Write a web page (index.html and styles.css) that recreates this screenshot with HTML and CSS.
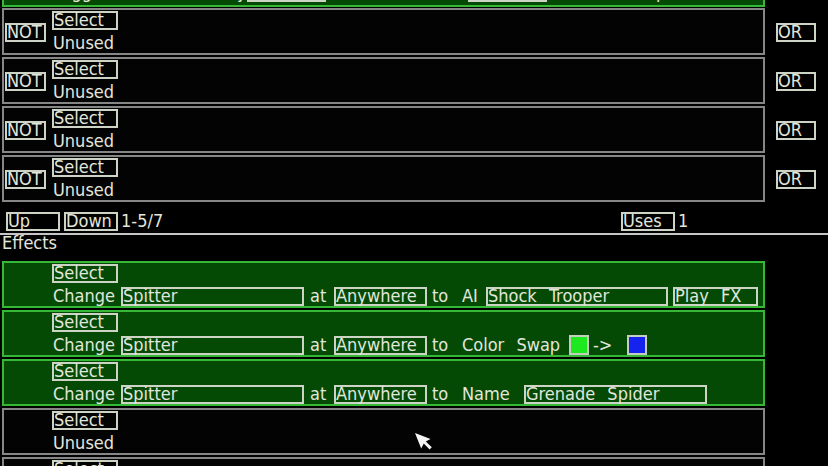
FILE: index.html
```html
<!DOCTYPE html>
<html>
<head>
<meta charset="utf-8">
<link rel="stylesheet" href="styles.css">
</head>
<body>
<div class="screen">
  <div class="row row-green row-top">
    <div class="col">
      <div class="line1"><span class="btn w-select">Select</span></div>
      <div class="line2">
        <span class="lbl w-change">Trigger</span>
        <span class="lbl w-trig">Unit Killed by</span>
        <span class="btn w-box79"></span>
        <span class="lbl w-mid">to</span>
        <span class="btn w-box79"></span>
        <span class="lbl w-tail">Other Group</span>
      </div>
    </div>
  </div>

  <div class="cond">
    <div class="row row-gray">
      <span class="btn btn-not">NOT</span>
      <div class="col col-cond">
        <div class="line1"><span class="btn w-select">Select</span></div>
        <div class="line2"><span class="lbl w-change">Unused</span></div>
      </div>
    </div>
    <span class="btn btn-or">OR</span>
  </div>
  <div class="cond">
    <div class="row row-gray">
      <span class="btn btn-not">NOT</span>
      <div class="col col-cond">
        <div class="line1"><span class="btn w-select">Select</span></div>
        <div class="line2"><span class="lbl w-change">Unused</span></div>
      </div>
    </div>
    <span class="btn btn-or">OR</span>
  </div>
  <div class="cond">
    <div class="row row-gray">
      <span class="btn btn-not">NOT</span>
      <div class="col col-cond">
        <div class="line1"><span class="btn w-select">Select</span></div>
        <div class="line2"><span class="lbl w-change">Unused</span></div>
      </div>
    </div>
    <span class="btn btn-or">OR</span>
  </div>
  <div class="cond">
    <div class="row row-gray">
      <span class="btn btn-not">NOT</span>
      <div class="col col-cond">
        <div class="line1"><span class="btn w-select">Select</span></div>
        <div class="line2"><span class="lbl w-change">Unused</span></div>
      </div>
    </div>
    <span class="btn btn-or">OR</span>
  </div>

  <div class="controls">
    <div class="ctl-left">
      <span class="btn btn-ctl btn-up">Up</span>
      <span class="btn btn-ctl btn-down">Down</span>
      <span class="lbl ctl-count">1-5/7</span>
    </div>
    <span class="btn btn-ctl">Uses</span>
    <span class="lbl ctl-uses">1</span>
  </div>

  <div class="section-title">Effects</div>

  <div class="row row-green erow">
    <div class="col">
      <div class="line1"><span class="btn w-select">Select</span></div>
      <div class="line2">
        <span class="lbl w-change">Change</span>
        <span class="btn w-unit">Spitter</span>
        <span class="lbl w-at">at</span>
        <span class="btn w-where">Anywhere</span>
        <span class="lbl w-to">to</span>
        <span class="lbl w-ai">AI</span>
        <span class="btn w-unit2">Shock Trooper</span>
        <span class="btn w-fx">Play FX</span>
      </div>
    </div>
  </div>
  <div class="row row-green erow">
    <div class="col">
      <div class="line1"><span class="btn w-select">Select</span></div>
      <div class="line2">
        <span class="lbl w-change">Change</span>
        <span class="btn w-unit">Spitter</span>
        <span class="lbl w-at">at</span>
        <span class="btn w-where">Anywhere</span>
        <span class="lbl w-to">to</span>
        <span class="lbl w-color">Color Swap</span>
        <span class="swatch swatch-green"></span>
        <span class="lbl w-arrow">-&gt;</span>
        <span class="swatch swatch-blue"></span>
      </div>
    </div>
  </div>
  <div class="row row-green erow">
    <div class="col">
      <div class="line1"><span class="btn w-select">Select</span></div>
      <div class="line2">
        <span class="lbl w-change">Change</span>
        <span class="btn w-unit">Spitter</span>
        <span class="lbl w-at">at</span>
        <span class="btn w-where">Anywhere</span>
        <span class="lbl w-to">to</span>
        <span class="lbl w-name">Name</span>
        <span class="btn w-unit">Grenade Spider</span>
      </div>
    </div>
  </div>
  <div class="row row-gray erow">
    <div class="col">
      <div class="line1"><span class="btn w-select">Select</span></div>
      <div class="line2"><span class="lbl w-change">Unused</span></div>
    </div>
  </div>
  <div class="row row-gray erow">
    <div class="col">
      <div class="line1"><span class="btn w-select">Select</span></div>
      <div class="line2"><span class="lbl w-change">Unused</span></div>
    </div>
  </div>

  <svg class="cursor" width="18" height="17" viewBox="0 0 18 17">
    <path d="M0 0 L15.5 6 L10.8 8.6 L16.8 14.2 L14.6 16.4 L8.8 10.6 L6.2 15.5 Z" fill="#f4f4f4"/>
  </svg>
</div>
</body>
</html>
```

FILE: styles.css
```css
html, body {
  margin: 0;
  padding: 0;
  background: #000000;
  overflow: hidden;
  height: 466px;
}

.screen {
  position: relative;
  display: flow-root;
  width: 828px;
  height: 466px;
  overflow: hidden;
  font-family: "DejaVu Sans Condensed", "DejaVu Sans", sans-serif;
  font-stretch: semi-condensed;
  font-size: 18px;
  word-spacing: 7px;
  color: #e2e6dc;
}

.row {
  box-sizing: border-box;
  width: 763px;
  height: 47px;
  margin-left: 2px;
  border: 2px solid #868686;
  display: flex;
  background: #030303;
}

.row-green {
  background: #044a04;
  border-color: #35b835;
}

.row-top {
  margin-top: -40px;
  margin-bottom: 1px;
}

.row-top .line2 {
  margin-top: 1px;
}

.erow {
  margin-bottom: 2px;
}

.cond {
  display: flex;
  align-items: center;
  margin-bottom: 2px;
}

.col {
  display: flex;
  flex-direction: column;
  padding-top: 1px;
  margin-left: 48px;
}

.col-cond {
  margin-left: 0;
}

.line1 {
  display: flex;
  height: 19px;
}

.line2 {
  display: flex;
  align-items: flex-end;
  height: 19px;
  margin-top: 4px;
}

.btn,
.lbl {
  box-sizing: border-box;
  display: block;
  height: 19px;
  line-height: 13px;
  padding: 0 0 2px 0;
  white-space: pre;
  flex: none;
}

.btn {
  border: 2px solid #cdd4c6;
}

.lbl {
  border-top: 2px solid transparent;
  border-bottom: 2px solid transparent;
}

.w-select { width: 66px; }

.btn-not {
  width: 41px;
  margin: 2px 6px 0 1px;
  align-self: center;
}

.btn-or {
  width: 40px;
  margin: 2px 0 0 11px;
}

.w-change { width: 69px; padding-left: 1px; }
.w-unit { width: 183px; }
.w-unit2 { width: 182px; }
.w-at { width: 30px; padding-left: 6px; }
.w-where { width: 93px; }
.w-to { width: 35px; padding-left: 5px; }
.w-ai { width: 24px; }
.w-fx { width: 85px; margin-left: 5px; }
.w-color { width: 107px; }
.w-arrow { width: 38px; padding-left: 4px; }
.w-name { width: 62px; }

.w-trig { width: 126px; padding-left: 4px; }
.w-box79 { width: 79px; }
.w-mid { width: 142px; padding-left: 6px; }
.w-tail { padding-left: 12px; }

.swatch {
  box-sizing: border-box;
  display: block;
  width: 20px;
  height: 20px;
  border: 2px solid #c4cec0;
  flex: none;
}

.swatch-green { background: #1ee81e; }
.swatch-blue { background: #1424ee; }

.controls {
  display: flex;
  margin-top: 10px;
  padding-bottom: 2px;
  border-bottom: 2px solid #c6c6c6;
}

.ctl-left {
  display: flex;
  width: 621px;
}

.btn-ctl { width: 54px; }
.btn-up { margin-left: 6px; }
.btn-down { margin-left: 4px; }
.ctl-count { margin-left: 3px; }
.ctl-uses { margin-left: 3px; }

.section-title {
  line-height: 16px;
  height: 16px;
  padding-left: 2px;
  margin-bottom: 10px;
}

.cursor {
  position: absolute;
  left: 415px;
  top: 433px;
}
```
